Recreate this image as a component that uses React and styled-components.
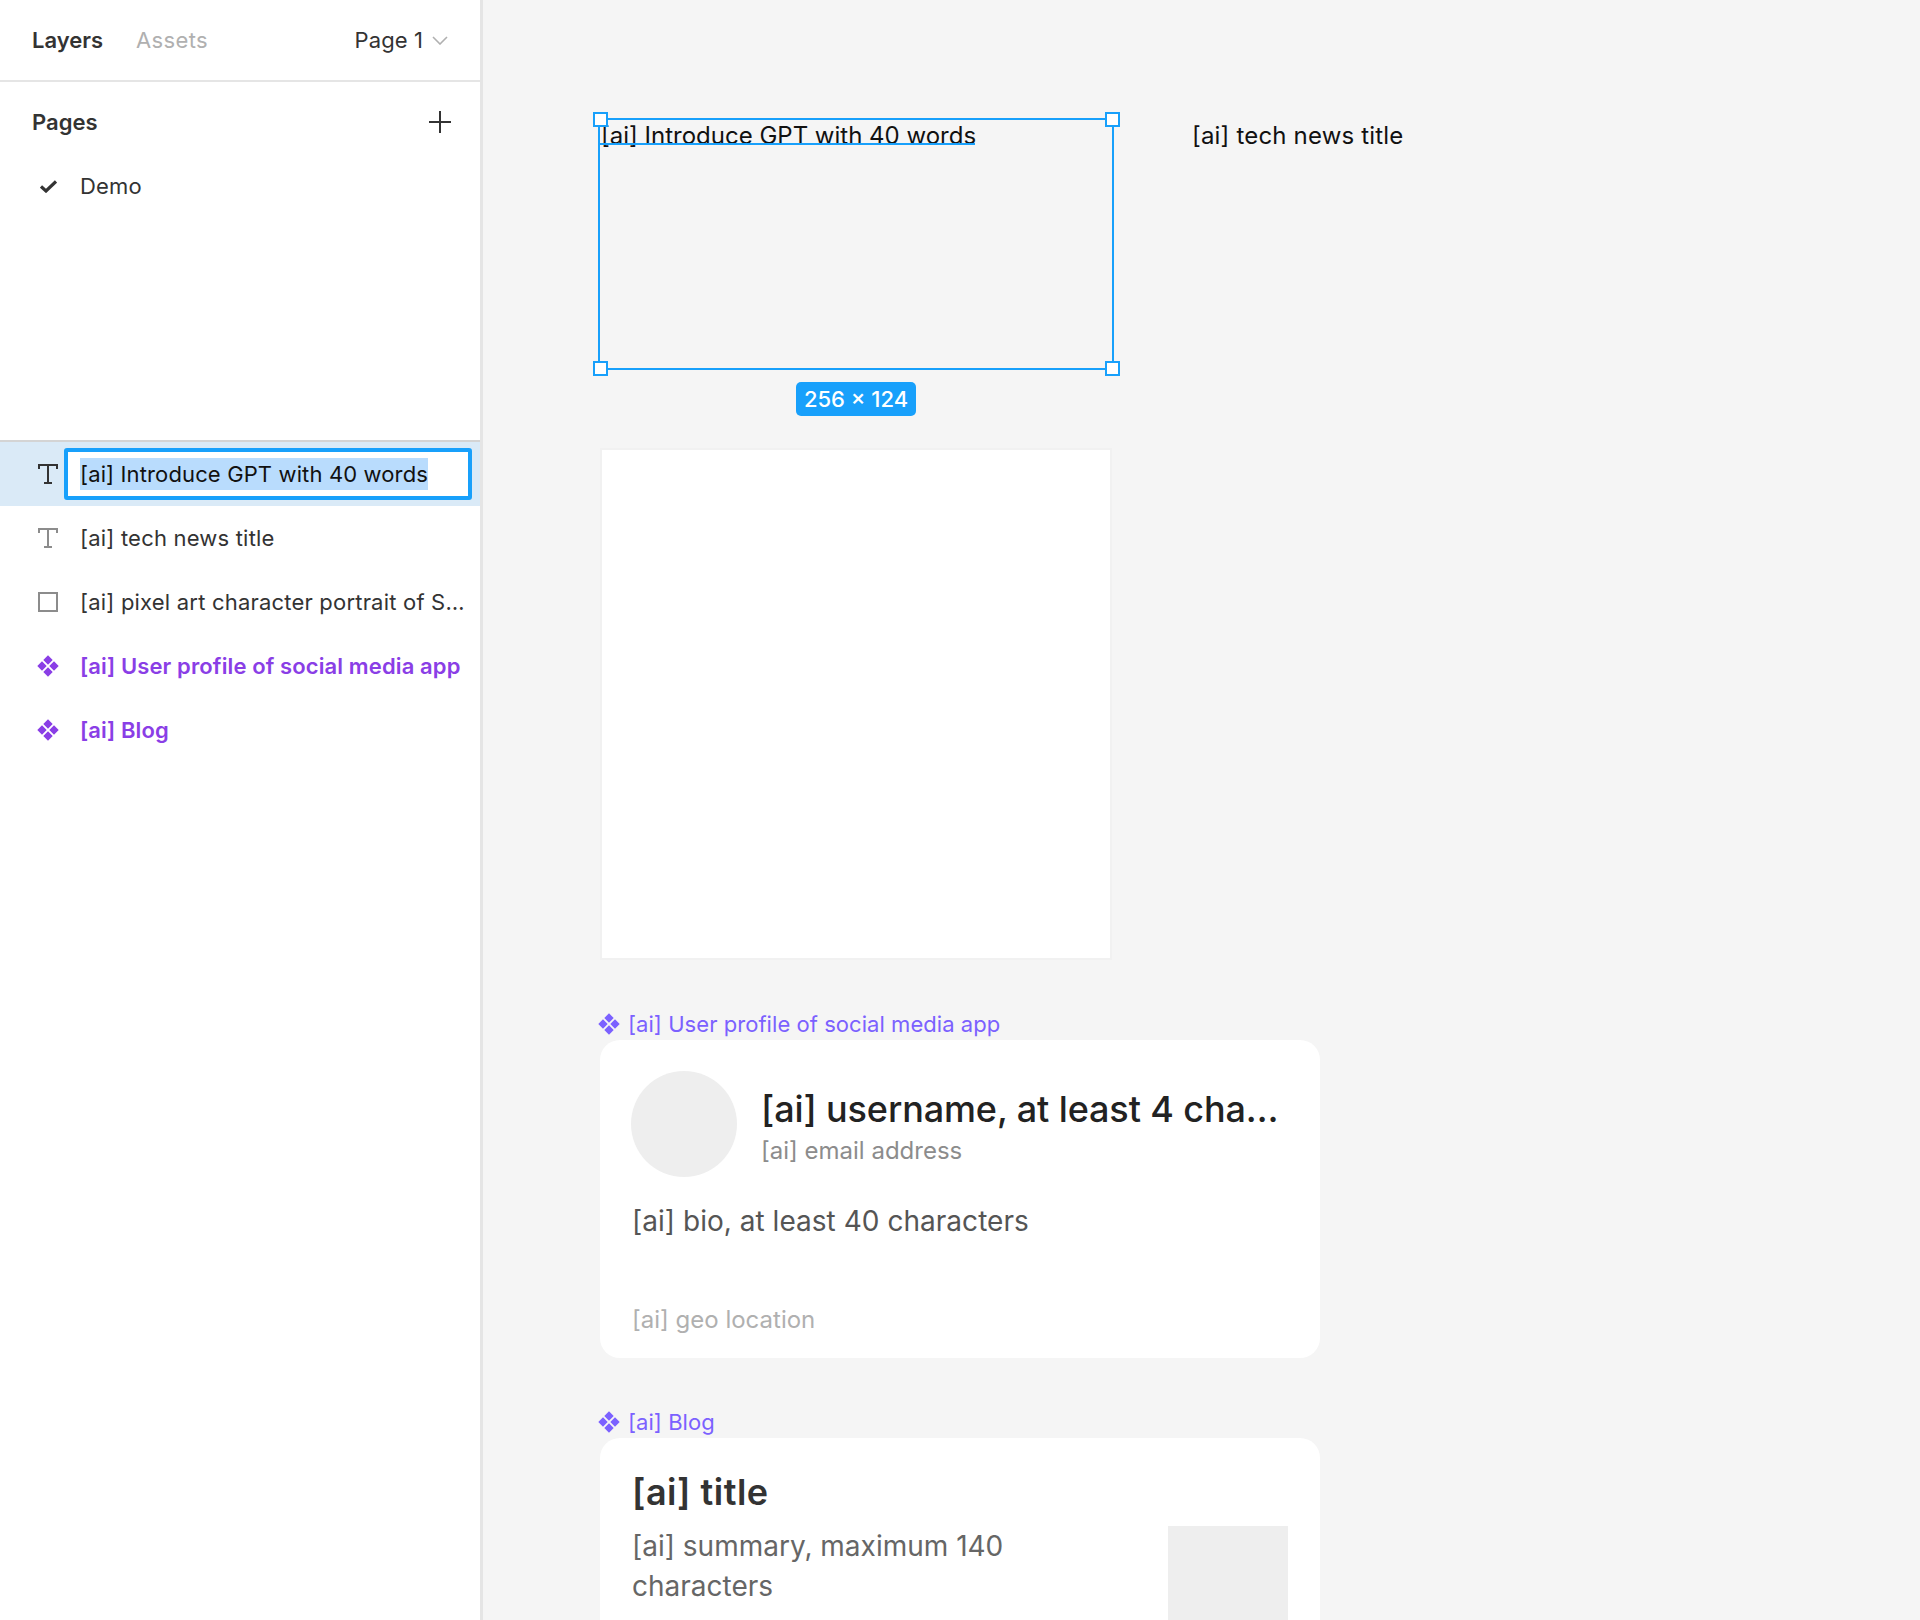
import React from 'react'
import styled, { createGlobalStyle } from 'styled-components'

const GlobalStyle = createGlobalStyle`
  html, body { margin: 0; padding: 0; background: #f5f5f5; }
  * { box-sizing: border-box; }
  body { font-family: Inter, "Liberation Sans", sans-serif; }
`

const Page = styled.div`
  display: flex;
  width: 1920px;
  height: 1620px;
  overflow: hidden;
`

const Sidebar = styled.aside`
  display: flex;
  flex-direction: column;
  width: 483px;
  flex: none;
  background: #fff;
  border-right: 3px solid #e5e5e5;
`

const Tabs = styled.div`
  display: flex;
  align-items: center;
  gap: 33px;
  height: 82px;
  padding: 0 32px;
  border-bottom: 2px solid #e5e5e5;
`

const Tab = styled.div`
  font-size: 22px;
  letter-spacing: ${p => (p.$active ? 0 : 0.35)}px;
  font-weight: ${p => (p.$active ? 600 : 400)};
  color: ${p => (p.$active ? '#333' : '#b0b0b0')};
`

const PagePicker = styled.div`
  display: flex;
  align-items: center;
  gap: 9px;
  margin-left: auto;
  font-size: 22px;
  letter-spacing: 0.1px;
  color: #333;
`

const PagesPanel = styled.div`
  height: 360px;
  border-bottom: 2px solid #d4d4d4;
`

const PagesHeader = styled.div`
  display: flex;
  align-items: center;
  justify-content: space-between;
  height: 80px;
  padding: 0 29px 0 32px;
  font-size: 22px;
  font-weight: 600;
  color: #333;
`

const PageRow = styled.div`
  display: flex;
  align-items: center;
  gap: 23px;
  height: 48px;
  padding-left: 40px;
  font-size: 22px;
  letter-spacing: 0.2px;
  color: #333;
`

const LayerRow = styled.div`
  display: flex;
  align-items: center;
  height: 64px;
  padding-left: 37px;
  gap: 21px;
  font-size: 22px;
  letter-spacing: ${p => (p.$component ? 0.12 : 0.2)}px;
  font-weight: ${p => (p.$component ? 600 : 400)};
  color: ${p => (p.$component ? '#8a3ee6' : '#333')};
  background: ${p => (p.$selected ? '#daeaf7' : 'transparent')};
`

const IconSlot = styled.span`
  display: flex;
  flex: none;
  width: 22px;
  justify-content: center;
  color: ${p => p.$color || 'currentColor'};
`

const LayerName = styled.span`
  white-space: nowrap;
`

const NameInput = styled.div`
  display: flex;
  align-items: center;
  flex: none;
  width: 408px;
  height: 52px;
  margin-left: -16px;
  padding-left: 12px;
  background: #fff;
  border: 4px solid #18a0fb;
  border-radius: 3px;
  letter-spacing: 0.13px;
  color: #111;
`

const Highlight = styled.span`
  background: #b9dcfd;
  line-height: 32px;
`

const Canvas = styled.main`
  position: relative;
  flex: 1;
  background: #f5f5f5;
`

/* everything below sits on the free canvas, so offsets are page x minus 483 */
const CanvasText = styled.div`
  position: absolute;
  left: ${p => p.$x}px;
  top: ${p => p.$y}px;
  font-size: 24px;
  line-height: 30px;
  letter-spacing: ${p => p.$spacing || 0}px;
  color: #111;
  white-space: nowrap;
`

const SelectionBox = styled.div`
  position: absolute;
  left: 115px;
  top: 118px;
  width: 516px;
  height: 252px;
  border: 2px solid #18a0fb;
`

const TextUnderline = styled.div`
  position: absolute;
  left: 0;
  top: 23px;
  width: 375px;
  height: 2px;
  background: #18a0fb;
`

const Handle = styled.div`
  position: absolute;
  width: 15px;
  height: 15px;
  background: #fff;
  border: 2px solid #18a0fb;
  ${p => (p.$right ? 'right: -8px;' : 'left: -7px;')}
  ${p => (p.$bottom ? 'bottom: -8px;' : 'top: -8px;')}
`

const SizeBadge = styled.div`
  position: absolute;
  left: 313px;
  top: 382px;
  width: 120px;
  height: 34px;
  display: flex;
  align-items: center;
  justify-content: center;
  background: #18a0fb;
  border-radius: 5px;
  color: #fff;
  font-size: 22px;
  font-weight: 500;
`

const WhiteFrame = styled.div`
  position: absolute;
  left: 119px;
  top: 450px;
  width: 508px;
  height: 508px;
  background: #fff;
  box-shadow: 0 0 0 2px #f1f1f1;
`

const ComponentLabel = styled.div`
  position: absolute;
  left: 115px;
  top: ${p => p.$y}px;
  display: flex;
  align-items: center;
  gap: 8px;
  font-size: 22px;
  line-height: 30px;
  letter-spacing: 0.05px;
  color: #7b61ff;
  white-space: nowrap;
`

const Card = styled.div`
  position: absolute;
  left: 117px;
  top: ${p => p.$y}px;
  width: 720px;
  height: ${p => p.$h}px;
  padding: 31px 32px 0 31px;
  background: #fff;
  border-radius: 20px;
`

const ProfileHead = styled.div`
  display: flex;
  align-items: center;
  gap: 24px;
`

const Avatar = styled.div`
  width: 106px;
  height: 106px;
  flex: none;
  border-radius: 50%;
  background: #eee;
`

const ProfileNames = styled.div`
  min-width: 0;
  flex: 1;
  padding-top: 5px;
`

const Username = styled.div`
  font-size: 36px;
  line-height: 44px;
  letter-spacing: -0.12px;
  font-weight: 450;
  color: #222;
  white-space: nowrap;
`

const Email = styled.div`
  margin-top: 5px;
  font-size: 24px;
  line-height: 30px;
  color: #8c8c8c;
`

const Bio = styled.div`
  margin: 24px 0 0 1px;
  font-size: 28px;
  line-height: 40px;
  letter-spacing: 0.03px;
  color: #555;
`

const Location = styled.div`
  margin: 64px 0 0 1px;
  font-size: 24px;
  line-height: 30px;
  color: #b0b0b0;
`

const BlogBody = styled.div`
  display: flex;
  justify-content: space-between;
  gap: 24px;
  margin-left: 1px;
`

const BlogTitle = styled.div`
  margin: -1px 0 0 1px;
  font-size: 36px;
  line-height: 48px;
  letter-spacing: 0.5px;
  font-weight: 600;
  color: #333;
`

const BlogSummary = styled.div`
  width: 400px;
  margin-top: 10px;
  font-size: 28px;
  line-height: 40px;
  color: #666;
`

const BlogImage = styled.div`
  flex: none;
  width: 120px;
  height: 120px;
  margin-top: 10px;
  background: #eee;
`

const TextIcon = ({ size = 22 }) => (
  <svg width={size} height={size} viewBox="0 0 22 22" fill="none" stroke="currentColor" strokeWidth="2">
    <path d="M2 6V2h18v4M11 2v18M7 20h8" />
  </svg>
)

const ComponentIcon = ({ size = 22 }) => (
  <svg width={size} height={size} viewBox="0 0 22 22" fill="currentColor">
    <path d="M11 .3L15.7 5 11 9.7 6.3 5zM5 6.3L9.7 11 5 15.7.3 11zM17 6.3l4.7 4.7-4.7 4.7-4.7-4.7zM11 12.3l4.7 4.7-4.7 4.7L6.3 17z" />
  </svg>
)

const layers = [
  { name: '[ai] tech news title', icon: <TextIcon />, color: '#8c8c8c' },
  {
    name: '[ai] pixel art character portrait of S…',
    icon: (
      <svg width="22" height="22" viewBox="0 0 22 22" fill="none" stroke="currentColor" strokeWidth="2">
        <rect x="2" y="2" width="18" height="18" />
      </svg>
    ),
    color: '#8c8c8c',
  },
  { name: '[ai] User profile of social media app', icon: <ComponentIcon />, component: true },
  { name: '[ai] Blog', icon: <ComponentIcon />, component: true },
]

export default function App() {
  return (
    <>
      <GlobalStyle />
      <Page>
        <Sidebar>
          <Tabs>
            <Tab $active>Layers</Tab>
            <Tab>Assets</Tab>
            <PagePicker>
              Page 1
              <svg width="16" height="9" viewBox="0 0 16 9" fill="none" stroke="#b0b0b0" strokeWidth="1.6">
                <path d="M1 1l7 7 7-7" />
              </svg>
            </PagePicker>
          </Tabs>
          <PagesPanel>
            <PagesHeader>
              Pages
              <svg width="22" height="22" viewBox="0 0 22 22" fill="none" stroke="#333" strokeWidth="2">
                <path d="M11 0v22M0 11h22" />
              </svg>
            </PagesHeader>
            <PageRow>
              <svg width="17" height="13" viewBox="0 0 17 13" fill="none" stroke="#333" strokeWidth="3.2">
                <path d="M1 6.5L6 11l10-9.5" />
              </svg>
              Demo
            </PageRow>
          </PagesPanel>
          <LayerRow $selected>
            <IconSlot>
              <TextIcon />
            </IconSlot>
            <NameInput>
              <Highlight>[ai] Introduce GPT with 40 words</Highlight>
            </NameInput>
          </LayerRow>
          {layers.map(layer => (
            <LayerRow key={layer.name} $component={layer.component}>
              <IconSlot $color={layer.color}>{layer.icon}</IconSlot>
              <LayerName>{layer.name}</LayerName>
            </LayerRow>
          ))}
        </Sidebar>
        <Canvas>
          <SelectionBox>
            <CanvasText $x={1} $y={1}>[ai] Introduce GPT with 40 words</CanvasText>
            <TextUnderline />
            <Handle />
            <Handle $right />
            <Handle $bottom />
            <Handle $right $bottom />
          </SelectionBox>
          <SizeBadge>256 × 124</SizeBadge>
          <CanvasText $x={709} $y={121} $spacing={0.18}>[ai] tech news title</CanvasText>
          <WhiteFrame />
          <ComponentLabel $y={1009}>
            <ComponentIcon />
            [ai] User profile of social media app
          </ComponentLabel>
          <Card $y={1040} $h={318}>
            <ProfileHead>
              <Avatar />
              <ProfileNames>
                <Username>[ai] username, at least 4 cha…</Username>
                <Email>[ai] email address</Email>
              </ProfileNames>
            </ProfileHead>
            <Bio>[ai] bio, at least 40 characters</Bio>
            <Location>[ai] geo location</Location>
          </Card>
          <ComponentLabel $y={1407}>
            <ComponentIcon />
            [ai] Blog
          </ComponentLabel>
          <Card $y={1438} $h={300}>
            <BlogTitle>[ai] title</BlogTitle>
            <BlogBody>
              <BlogSummary>[ai] summary, maximum 140 characters</BlogSummary>
              <BlogImage />
            </BlogBody>
          </Card>
        </Canvas>
      </Page>
    </>
  )
}
